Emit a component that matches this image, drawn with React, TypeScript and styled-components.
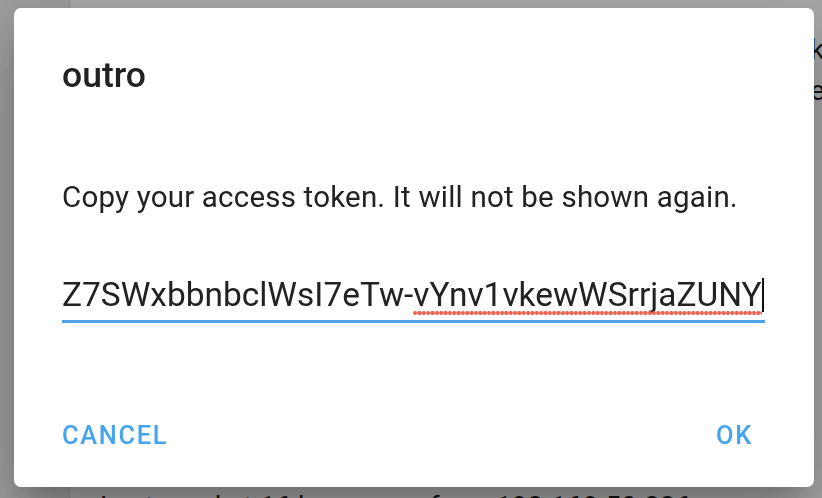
import React from "react";
import styled, { createGlobalStyle } from "styled-components";

const GlobalStyle = createGlobalStyle`
  html, body { margin: 0; padding: 0; }
  body { font-family: Roboto, "Liberation Sans", Arial, sans-serif; background: #fff; }
  * { box-sizing: border-box; }
`;

const Page = styled.div`
  width: 822px;
  height: 498px;
  overflow: hidden;
  display: flex;
  background: #fff;
`;

const Sidebar = styled.div`
  width: 70px;
  flex: none;
  background: #f0f0f0;
  border-right: 1px solid #d8d8d8;
`;

const Main = styled.div`
  flex: 1;
  display: grid;
  grid-template-columns: 740px 1fr;
  color: #222;
  font-size: 28px;
`;

const LeftCol = styled.div`
  display: flex;
  flex-direction: column;
  justify-content: flex-end;
  padding: 0 0 0 30px;
`;

const RightCol = styled.div`
  display: flex;
  flex-direction: column;
  gap: 8px;
  padding-top: 33px;
  white-space: nowrap;
`;

const BgLine = styled.div`
  line-height: 32px;
  white-space: nowrap;
  margin-bottom: -25px;
`;

const Overlay = styled.div`
  position: fixed;
  inset: 0;
  background: rgba(0, 0, 0, 0.34);
  display: flex;
  align-items: flex-start;
  padding: 8px 0 0 14px;
`;

const Dialog = styled.div`
  width: 800px;
  height: 479px;
  background: #fff;
  border-radius: 7px;
  display: flex;
  flex-direction: column;
  padding: 0 49px 0 48px;
  box-shadow: 0 20px 27px -12px rgba(0, 0, 0, 0.2),
    0 43px 68px 5px rgba(0, 0, 0, 0.14),
    0 16px 83px 14px rgba(0, 0, 0, 0.12);
`;

const Title = styled.h2`
  margin: 47px 0 0;
  font-size: 35.5px;
  line-height: 40px;
  font-weight: 500;
  color: #212121;
`;

const Message = styled.p`
  margin: 84px 0 0;
  font-size: 29.5px;
  line-height: 36px;
  font-weight: 400;
  color: #222;
  letter-spacing: 0.2px;
`;

const Field = styled.div`
  margin-top: 60px;
  font-size: 33.45px;
  line-height: 40px;
  color: #222;
  white-space: nowrap;
  padding-bottom: 5px;
  border-bottom: 3px solid #4aa3ea;
  display: flex;
  align-items: center;
`;

const Misspelled = styled.span`
  position: relative;
  &::after {
    content: "";
    position: absolute;
    left: 0;
    right: 0;
    bottom: -1px;
    height: 6px;
    background-image: radial-gradient(circle, #e8604f 1.6px, rgba(240, 120, 100, 0.5) 2.1px, transparent 2.4px);
    background-size: 4.35px 6px;
    background-repeat: repeat-x;
  }
`;

const Caret = styled.span`
  display: inline-block;
  flex: none;
  width: 2px;
  height: 34px;
  background: #111;
`;

const Actions = styled.div`
  margin-top: auto;
  margin-bottom: 37px;
  margin-right: 12px;
  display: flex;
  justify-content: space-between;
  align-items: center;
`;

const TextButton = styled.button`
  border: none;
  background: none;
  padding: 0;
  font-family: Roboto, "Liberation Sans", Arial, sans-serif;
  font-size: 25.4px;
  line-height: 30px;
  font-weight: 500;
  letter-spacing: 1.7px;
  text-transform: uppercase;
  color: #45a4ee;
  cursor: pointer;
`;

export default function App() {
  return (
    <>
      <GlobalStyle />
      <Page>
        <Sidebar />
        <Main>
          <LeftCol>
            <BgLine>Last used at 16 hours ago from 192.168.50.226</BgLine>
          </LeftCol>
          <RightCol>
            <span>key</span>
            <span>expires</span>
          </RightCol>
        </Main>
      </Page>
      <Overlay>
        <Dialog role="dialog">
          <Title>outro</Title>
          <Message>Copy your access token. It will not be shown again.</Message>
          <Field>
            Z7SWxbbnbclWsI7eTw-<Misspelled>vYnv1vkewWSrrjaZUNY</Misspelled>
            <Caret />
          </Field>
          <Actions>
            <TextButton>Cancel</TextButton>
            <TextButton>OK</TextButton>
          </Actions>
        </Dialog>
      </Overlay>
    </>
  );
}
